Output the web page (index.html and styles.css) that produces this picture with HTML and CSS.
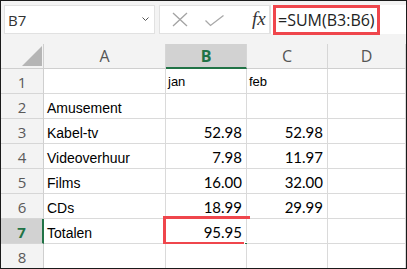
FILE: index.html
```html
<!DOCTYPE html>
<html lang="nl">

<head>
    <meta charset="UTF-8">
    <meta name="viewport" content="width=device-width, initial-scale=1.0">
    <title>Totalen</title>
    <link rel="stylesheet" href="styles.css">
</head>

<body>
    <div class="sheet">
        <!-- formulebalk -->
        <div class="toolbar">
            <div class="namebox">
                <span>B7</span>
                <svg class="chevron" width="7" height="5" viewBox="0 0 7 5"><polyline points="0.5,0.5 3.5,3.5 6.5,0.5" fill="none" stroke="#555" stroke-width="1"/></svg>
            </div>
            <div class="funcbox">
                <svg class="icon-x" width="16" height="15" viewBox="0 0 16 15"><path d="M1 1 L15 14 M15 1 L1 14" stroke="#a3a3a3" stroke-width="1.3" fill="none"/></svg>
                <svg class="icon-check" width="19" height="12" viewBox="0 0 19 12"><polyline points="0.5,5.5 5.5,10.5 18.5,0.5" fill="none" stroke="#a8a8a8" stroke-width="1.3"/></svg>
                <span class="fx">fx</span>
            </div>
            <div class="formula">
                <span class="formula-text">=SUM(B3:B6)</span>
            </div>
        </div>

        <!-- werkblad -->
        <div class="grid">
            <div class="corner"><svg width="20" height="20" viewBox="0 0 20 20"><polygon points="20,0 20,20 0,20" fill="#b5b5b5"/></svg></div>
            <div class="colhdr">A</div>
            <div class="colhdr active">B</div>
            <div class="colhdr">C</div>
            <div class="colhdr">D</div>

            <div class="rowhdr">1</div>
            <div class="cell"></div>
            <div class="cell small">jan</div>
            <div class="cell small">feb</div>
            <div class="cell"></div>

            <div class="rowhdr">2</div>
            <div class="cell">Amusement</div>
            <div class="cell"></div>
            <div class="cell"></div>
            <div class="cell"></div>

            <div class="rowhdr">3</div>
            <div class="cell">Kabel-tv</div>
            <div class="cell num">52.98</div>
            <div class="cell num">52.98</div>
            <div class="cell"></div>

            <div class="rowhdr">4</div>
            <div class="cell">Videoverhuur</div>
            <div class="cell num">7.98</div>
            <div class="cell num">11.97</div>
            <div class="cell"></div>

            <div class="rowhdr">5</div>
            <div class="cell">Films</div>
            <div class="cell num">16.00</div>
            <div class="cell num">32.00</div>
            <div class="cell"></div>

            <div class="rowhdr">6</div>
            <div class="cell">CDs</div>
            <div class="cell num">18.99</div>
            <div class="cell num">29.99</div>
            <div class="cell"></div>

            <div class="rowhdr active">7</div>
            <div class="cell">Totalen</div>
            <div class="cell num selected">95.95<span class="mark"></span><span class="handle"></span></div>
            <div class="cell"></div>
            <div class="cell"></div>

            <div class="rowhdr">8</div>
            <div class="cell"></div>
            <div class="cell"></div>
            <div class="cell"></div>
            <div class="cell"></div>
        </div>
    </div>
</body>

</html>
```

FILE: styles.css
```css
* {
    margin: 0;
    padding: 0;
    box-sizing: border-box;
}

body {
    background: #fff;
}

.sheet {
    width: 407px;
    height: 269px;
    border: 1px solid #1a1a1a;
    background: #f3f3f3;
    overflow: hidden;
}

/* formulebalk */
.toolbar {
    height: 33px;
    display: flex;
    align-items: flex-start;
    padding: 4px 0 0 3px;
}

.namebox {
    width: 151px;
    height: 29px;
    background: #fff;
    border: 1px solid #e1e1e1;
    display: flex;
    align-items: center;
    justify-content: space-between;
    padding: 0 5px 0 3px;
    font: 15px "Open Sans", sans-serif;
    color: #333;
}

.funcbox {
    width: 111px;
    height: 29px;
    margin-left: 4px;
    background: #fff;
    border: 1px solid #e1e1e1;
    display: flex;
    align-items: center;
    padding-left: 12px;
}

.icon-check {
    margin-left: 17px;
    margin-top: 2px;
}

.fx {
    margin-left: 28px;
    font: italic 19px "Liberation Serif", serif;
    color: #333;
    margin-top: -2px;
}

.formula {
    flex: 1;
    height: 29px;
    background: #fff;
    border-left: 1px solid #e1e1e1;
}

.formula-text {
    display: block;
    width: 107px;
    height: 30px;
    margin-left: 2px;
    border: 3px solid #ef464c;
    padding-left: 2px;
    font: 16px/24px "Open Sans", sans-serif;
    color: #222;
}

/* werkblad */
.grid {
    display: grid;
    grid-template-columns: 43px 122px 81px 81px 1fr;
    grid-template-rows: repeat(9, 25px);
    padding-top: 10px;
}

.corner {
    border-right: 1px solid #cfcfcf;
    border-bottom: 1px solid #cfcfcf;
    display: flex;
    align-items: flex-end;
    justify-content: flex-end;
    padding: 0 1px 2px 0;
}

.colhdr {
    border-right: 1px solid #d6d6d6;
    border-bottom: 1px solid #cfcfcf;
    display: flex;
    align-items: center;
    justify-content: center;
    font: 16px "Open Sans", sans-serif;
    color: #555;
}

.colhdr.active {
    background: #d2d2d2;
    border-bottom: 2px solid #217346;
    color: #217346;
    font-weight: bold;
}

.rowhdr {
    border-right: 1px solid #cfcfcf;
    border-bottom: 1px solid #d6d6d6;
    display: flex;
    align-items: center;
    justify-content: center;
    font: 15px "Open Sans", sans-serif;
    color: #595959;
    padding-top: 1px;
}

.rowhdr.active {
    background: #d2d2d2;
    border-right: 2px solid #217346;
    color: #217346;
    font-weight: bold;
}

.cell {
    background: #fff;
    border-right: 1px solid #dadada;
    border-bottom: 1px solid #dadada;
    display: flex;
    align-items: flex-end;
    padding: 0 4px 2px 3px;
    font: 14px/16px "Liberation Sans", Arial, sans-serif;
    color: #000;
    position: relative;
}

.cell.small {
    font-size: 13px;
    padding-left: 2px;
    padding-bottom: 3px;
}

.cell.num {
    justify-content: flex-end;
    font: 15px/17px Lato, sans-serif;
}

/* rode markering rond B7 */
.mark {
    position: absolute;
    left: -3px;
    top: -3px;
    width: 87px;
    height: 29px;
    border: 3px solid #ef464c;
}

.handle {
    position: absolute;
    left: 78px;
    top: 23px;
    width: 5px;
    height: 5px;
    background: #217346;
    border: 1px solid #fff;
}
```
